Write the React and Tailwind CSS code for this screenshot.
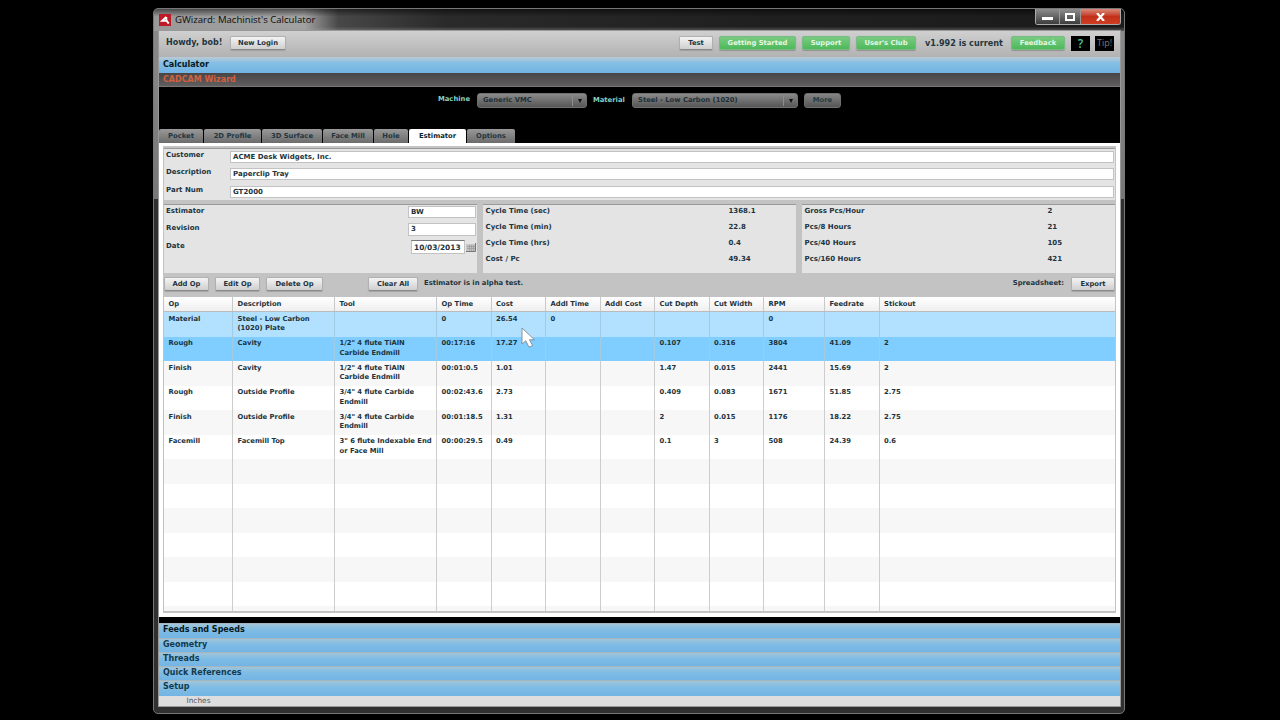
import React from 'react';
import clsx from 'clsx';

const tabs = [
  { name: 'Pocket', width: 'w-[44px]' },
  { name: '2D Profile', width: 'w-[57px]' },
  { name: '3D Surface', width: 'w-[60px]' },
  { name: 'Face Mill', width: 'w-[50px]' },
  { name: 'Hole', width: 'w-[34px]' },
  { name: 'Estimator', width: 'w-[57px]' },
  { name: 'Options', width: 'w-[48px]' },
];

const columns = ['Op', 'Description', 'Tool', 'Op Time', 'Cost', 'Addl Time', 'Addl Cost', 'Cut Depth', 'Cut Width', 'RPM', 'Feedrate', 'Stickout'];

const operations = [
  ['Material', 'Steel - Low Carbon (1020) Plate', '', '0', '26.54', '0', '', '', '', '0', '', ''],
  ['Rough', 'Cavity', '1/2" 4 flute TiAlN Carbide Endmill', '00:17:16', '17.27', '', '', '0.107', '0.316', '3804', '41.09', '2'],
  ['Finish', 'Cavity', '1/2" 4 flute TiAlN Carbide Endmill', '00:01:0.5', '1.01', '', '', '1.47', '0.015', '2441', '15.69', '2'],
  ['Rough', 'Outside Profile', '3/4" 4 flute Carbide Endmill', '00:02:43.6', '2.73', '', '', '0.409', '0.083', '1671', '51.85', '2.75'],
  ['Finish', 'Outside Profile', '3/4" 4 flute Carbide Endmill', '00:01:18.5', '1.31', '', '', '2', '0.015', '1176', '18.22', '2.75'],
  ['Facemill', 'Facemill Top', '3" 6 flute Indexable End or Face Mill', '00:00:29.5', '0.49', '', '', '0.1', '3', '508', '24.39', '0.6'],
];

// the last one is only partly visible
const emptyRows = [6, 7, 8, 9, 10, 11, 12];

const cycleStats = [
  ['Cycle Time (sec)', '1368.1'],
  ['Cycle Time (min)', '22.8'],
  ['Cycle Time (hrs)', '0.4'],
  ['Cost / Pc', '49.34'],
];

const pieceStats = [
  ['Gross Pcs/Hour', '2'],
  ['Pcs/8 Hours', '21'],
  ['Pcs/40 Hours', '105'],
  ['Pcs/160 Hours', '421'],
];

const gridCols = 'grid grid-cols-[69px_102px_102px_54.5px_54.5px_54.5px_54.5px_54.5px_54.5px_61px_54.5px_1fr]';

const Button = ({ className, children }) => (
  <button className={clsx('h-[14px] shrink-0 rounded-[2px] border border-[#b0b0b0] border-b-[#8a8a8a] bg-linear-to-b from-[#f4f4f4] to-[#cfcfcf] text-center leading-[12px] shadow-[0_1px_1px_#8888]', className)}>
    {children}
  </button>
);

const GreenButton = ({ className, children }) => (
  <button className={clsx('h-[14px] shrink-0 rounded-[2px] border border-[#79b982] bg-linear-to-b from-[#78cb80] to-[#4db95a] text-center leading-[12px] text-[#e4f8e4] shadow-[0_1px_1px_#7779]', className)}>
    {children}
  </button>
);

const Dropdown = ({ className, children }) => (
  <div className={clsx('flex h-[15px] items-center justify-between rounded-[3px] border border-[#707070] bg-linear-to-b from-[#8a8a8a] to-[#565656] pl-[5px] text-[#1e2f36]', className)}>
    <span>{children}</span>
    <span className="flex h-[11px] w-[14px] items-center justify-center border-l border-[#8c8c8c]">
      <svg width="4" height="4" viewBox="0 0 4 4"><path d="M0 0h4L2 4z" fill="#111" /></svg>
    </span>
  </div>
);

const AccordionBar = ({ className, children }) => (
  <div className={clsx('border-t border-[#a5b6c0] bg-linear-to-b from-[#a1c5d8] via-[#80bde5] via-40% to-[#72b4e4] pl-1 text-[8px] leading-[12px]', className)}>
    {children}
  </div>
);

const TextField = ({ label, value }) => (
  <div className="flex h-[17.6px]">
    <span className="w-[66px] pl-[2px] leading-[9px]">{label}</span>
    <div className="mr-[1px] h-[12px] flex-1 border border-[#c2c2c2] bg-white pl-[2px] leading-[10px]">{value}</div>
  </div>
);

const StatPanel = ({ className, stats }) => (
  <div className={clsx('h-[69px] border-t-[1.5px] border-[#999] bg-[#e4e4e4] pl-[2.5px] pt-[1.5px]', className)}>
    {stats.map(([label, value]) => (
      <div key={label} className="flex h-[16.3px] leading-[9px]">
        <span className="w-[243px]">{label}</span>
        <span>{value}</span>
      </div>
    ))}
  </div>
);

const App = () => {
  return (
    <div className="h-[720px] w-[1280px] overflow-hidden bg-black pl-[153px] pt-[8px] font-['DejaVu_Sans',sans-serif] text-[6.8px] font-bold whitespace-nowrap text-[#23363f]">
      <div className="relative h-[706px] w-[972px] rounded-[5px] border border-[#777] bg-linear-to-b from-[#8b8b8b] from-0% via-[#777] via-27% to-[#303030] to-27% px-[5px]">
        {/* Title bar */}
        <div className="-mx-[5px] flex h-[22px] justify-between rounded-t-[4px] bg-[linear-gradient(180deg,#0008,transparent_35%,transparent_80%,#9997),linear-gradient(90deg,#999_0,#a2a2a2_15.5%,#484848_19%,#2a2a2a_30%,#202020_60%,#1b1b1b)] pl-[5px]">
          <div className="flex h-[22px] items-center gap-[4px]">
            <svg width="12" height="12" viewBox="0 0 12 12">
              <rect width="12" height="12" fill="#bd1926" />
              <path d="M7.3 3v3.9H3.1l4.2-4M7.5 6.5L9.7 9.6" fill="none" stroke="#fff" strokeWidth="1.9" />
            </svg>
            <span className="font-['Open_Sans',sans-serif] text-[9.6px] font-normal text-[#0c0c0c]">GWizard: Machinist's Calculator</span>
          </div>
          <div className="mr-[3px] flex h-[16px] overflow-hidden rounded-b-[3px] border border-t-0 border-[#aaa]">
            <div className="flex w-[23px] items-end justify-center bg-linear-to-b from-[#8d8d8d] via-[#666] via-50% to-[#3c3c3c] pb-[4px]">
              <span className="h-[3px] w-[11px] bg-white" />
            </div>
            <div className="flex w-[22px] items-center justify-center border-x border-[#999] bg-linear-to-b from-[#8d8d8d] via-[#666] via-50% to-[#3c3c3c]">
              <span className="h-[8px] w-[10px] border-2 border-white" />
            </div>
            <div className="flex w-[39px] items-center justify-center bg-linear-to-b from-[#d9887a] via-[#c2301a] via-50% to-[#cf3e21]">
              <svg width="9" height="8" viewBox="0 0 9 8"><path d="M1 0l7 8M8 0L1 8" stroke="#fff" strokeWidth="2.2" /></svg>
            </div>
          </div>
        </div>

        <div className="h-[675px] w-[961px] bg-black shadow-[0_0_0_1px_#999]">
          {/* Top toolbar */}
          <div className="flex h-[26px] items-start bg-linear-to-b from-[#d0d0d0] to-[#b2b2b2] pt-[5px]">
            <span className="w-[71px] pl-[7px] text-[8px] leading-[14px]">Howdy, bob!</span>
            <Button className="w-[56px]">New Login</Button>
            <div className="ml-auto flex items-start">
              <Button className="mr-[6px] w-[34px]">Test</Button>
              <GreenButton className="mr-[6px] w-[77px]">Getting Started</GreenButton>
              <GreenButton className="mr-[6px] w-[48px]">Support</GreenButton>
              <GreenButton className="w-[60px]">User's Club</GreenButton>
              <span className="w-[95px] pl-[9px] text-[8.1px] leading-[14px]">v1.992 is current</span>
              <GreenButton className="mr-[6px] w-[54px]">Feedback</GreenButton>
              <span className="mr-[5px] h-[15px] w-[19px] bg-black text-center font-['Open_Sans',sans-serif] text-[12px] leading-[15px] font-semibold text-[#4cc0a4]">?</span>
              <span className="mr-[6px] h-[15px] w-[19px] bg-black text-center font-['Open_Sans',sans-serif] text-[9px] leading-[14px] font-normal text-[#777]">Tip!</span>
            </div>
          </div>
          <div className="h-[16px] bg-linear-to-b from-[#b9cbd4] via-[#86bfe4] via-35% to-[#72b4e4] pl-1 text-[8px] leading-[16px] text-[#071820]">Calculator</div>
          <div className="h-[14px] border-b border-[#777] bg-linear-to-b from-[#484546] to-[#615e60] pl-1 text-[8px] leading-[13px] text-[#d1623f]">CADCAM Wizard</div>

          {/* Machine and material */}
          <div className="flex h-[42px] pl-[279px] pt-[6px] text-[#86d0c1]">
            <span className="w-[39px] leading-[13px]">Machine</span>
            <Dropdown className="w-[110px]">Generic VMC</Dropdown>
            <span className="w-[45px] pl-[6px] leading-[14px]">Material</span>
            <Dropdown className="w-[166px]">Steel - Low Carbon (1020)</Dropdown>
            <button className="ml-[6px] h-[15px] w-[37px] rounded-[3px] border border-[#707070] bg-linear-to-b from-[#858585] to-[#565656] leading-[13px] text-[#263b42]">More</button>
          </div>

          {/* Tabs */}
          <div className="flex h-[14px] gap-[1px]">
            {tabs.map(t => (
              <div
                key={t.name}
                className={clsx('rounded-t-[2px] text-center leading-[14px]', t.width, t.name === 'Estimator' ? 'bg-white text-[#0f252e]' : 'bg-linear-to-b from-[#999] to-[#6c6c6c]')}
              >
                {t.name}
              </div>
            ))}
          </div>

          {/* Estimator panel */}
          <div className="h-[474px] bg-white px-[4px] pt-[3px] pb-[4px] text-[#1d3440]">
            <div className="h-[467px] bg-[#c3c3c3] px-[1px]">
              <div className="pt-[2px] text-[7px]">
                <div className="h-[51.5px] border-t-[1.5px] border-[#999] bg-[#e4e4e4] pt-[1.5px]">
                  <TextField label="Customer" value="ACME Desk Widgets, Inc." />
                  <TextField label="Description" value="Paperclip Tray" />
                  <TextField label="Part Num" value="GT2000" />
                </div>
              </div>
              <div className="mt-[4.5px] flex gap-[6px] text-[7px]">
                <div className="h-[69px] w-[313px] border-t-[1.5px] border-[#999] bg-[#e4e4e4] pr-[1px] pl-[2px]">
                  <div className="flex h-[17.6px] justify-between">
                    <span className="pt-[1.5px] leading-[9px]">Estimator</span>
                    <div className="mt-[0.5px] h-[12.5px] w-[68px] border border-[#c2c2c2] bg-white pl-[2px] leading-[11px]">BW</div>
                  </div>
                  <div className="flex h-[17.6px] justify-between">
                    <span className="pt-[1.5px] leading-[9px]">Revision</span>
                    <div className="mt-[0.5px] h-[12.5px] w-[68px] border border-[#c2c2c2] bg-white pl-[2px] leading-[11px]">3</div>
                  </div>
                  <div className="flex h-[17.6px]">
                    <span className="flex-1 pt-[1.5px] leading-[9px]">Date</span>
                    <div className="h-[14px] w-[54px] border border-t-[#777] border-[#c2c2c2] bg-white pl-[2px] text-[7.4px] leading-[13px]">10/03/2013</div>
                    <svg className="mt-[3px] ml-[1px]" width="10" height="9" viewBox="0 0 10 9">
                      <path d="M0 1h9v8H0z" fill="#c4c4c4" />
                      <path d="M9.5 0v8.5H0" fill="none" stroke="#777" />
                      <path d="M1 3.5h8M1 5.5h8M3.5 2v6M5.5 2v6M7.5 2v6" stroke="#999" strokeWidth=".7" />
                    </svg>
                  </div>
                </div>
                <StatPanel className="w-[313px]" stats={cycleStats} />
                <StatPanel className="flex-1" stats={pieceStats} />
              </div>

              {/* Operation buttons */}
              <div className="flex h-[24px] pt-[4px]">
                <Button className="mr-[6px] w-[45px]">Add Op</Button>
                <Button className="mr-[6px] w-[45px]">Edit Op</Button>
                <Button className="mr-[45px] w-[57px]">Delete Op</Button>
                <Button className="w-[50px]">Clear All</Button>
                <span className="pl-[6px] leading-[12px]">Estimator is in alpha test.</span>
                <span className="mr-[7px] ml-auto leading-[12px]">Spreadsheet:</span>
                <Button className="w-[44px]">Export</Button>
              </div>

              {/* Operations grid */}
              <div className="h-[314px] overflow-hidden bg-white">
                <div className={clsx(gridCols, 'h-[15px] border-b border-[#bbb] bg-linear-to-b from-white to-[#efefef]')}>
                  {columns.map(c => (
                    <span key={c} className="border-r border-[#c9c9c9] pl-[4.5px] leading-[14px] last:border-0">{c}</span>
                  ))}
                </div>
                {operations.map((op, i) => (
                  <div key={i} className={clsx(gridCols, 'h-[24.5px]', i === 0 ? 'bg-[#b2e1ff]' : i === 1 ? 'bg-[#7fceff]' : i % 2 === 0 ? 'bg-[#f7f7f7]' : 'bg-white')}>
                    {op.map((cell, j) => (
                      <span key={j} className={clsx('border-r pt-[2.5px] pl-[4.5px] leading-[9.5px] whitespace-normal last:border-0', i < 2 ? 'border-[#9fcbe5]' : 'border-[#cdcdcd]')}>{cell}</span>
                    ))}
                  </div>
                ))}
                {emptyRows.map(i => (
                  <div key={i} className={clsx(gridCols, 'h-[24.5px]', i % 2 === 0 ? 'bg-[#f7f7f7]' : 'bg-white')}>
                    {columns.map(c => <span key={c} className="border-r border-[#cdcdcd] last:border-0" />)}
                  </div>
                ))}
              </div>
            </div>
          </div>

          {/* Collapsed sections */}
          <div className="pt-[5.5px] text-[#123b50]">
            <AccordionBar className="h-[15.3px] text-[#071820]">Feeds and Speeds</AccordionBar>
            <AccordionBar className="h-[14.2px]">Geometry</AccordionBar>
            <AccordionBar className="h-[14.2px]">Threads</AccordionBar>
            <AccordionBar className="h-[14.2px]">Quick References</AccordionBar>
            <AccordionBar className="h-[15.6px]">Setup</AccordionBar>
          </div>
          <div className="h-[10px] bg-[#dedede] pl-[27.5px] text-[7.4px] leading-[9px] font-normal text-[#555]">Inches</div>
        </div>

        {/* Mouse pointer */}
        <svg className="absolute top-[318px] left-[367px]" width="16" height="23" viewBox="0 0 16 23">
          <path d="M1 1v16l3.8-3.2 3.2 6.4 3.6-1.7-3.1-5.7h5z" fill="#fff" stroke="#7b8b96" strokeWidth=".9" />
        </svg>
      </div>
    </div>
  );
};

export default App;
